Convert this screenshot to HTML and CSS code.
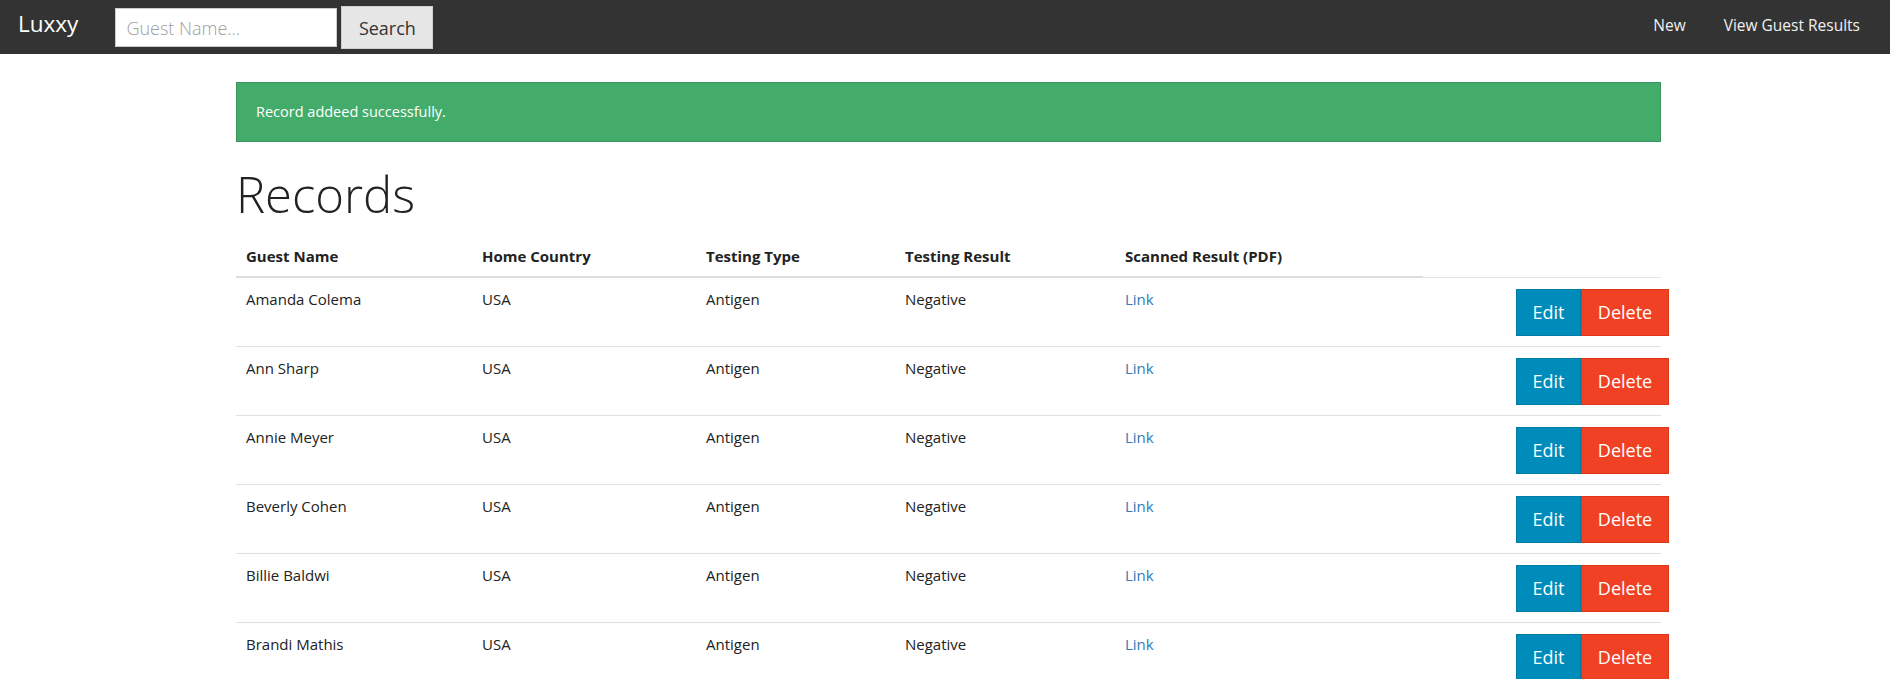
FILE: index.html
```html
<!DOCTYPE html>
<html lang="en">
<head>
<meta charset="utf-8">
<title>Luxxy - Records</title>
<link rel="stylesheet" href="styles.css">
</head>
<body>
<nav class="topbar">
  <div class="topbar-left">
    <a class="brand" href="#">Luxxy</a>
    <form class="search-form">
      <input class="search-input" type="text" placeholder="Guest Name...">
      <button class="search-btn" type="button">Search</button>
    </form>
  </div>
  <ul class="topbar-right">
    <li><a href="#">New</a></li>
    <li><a href="#">View Guest Results</a></li>
  </ul>
</nav>

<main class="container">
  <div class="alert-success">Record addeed successfully.</div>
  <h1 class="page-title">Records</h1>
  <table class="records">
    <colgroup>
      <col class="c-name">
      <col class="c-country">
      <col class="c-type">
      <col class="c-result">
      <col class="c-scan">
      <col class="c-actions">
    </colgroup>
    <thead>
      <tr>
        <th>Guest Name</th>
        <th>Home Country</th>
        <th>Testing Type</th>
        <th>Testing Result</th>
        <th>Scanned Result (PDF)</th>
        <th class="th-empty"></th>
      </tr>
    </thead>
    <tbody>
      <tr>
        <td>Amanda Colema</td><td>USA</td><td>Antigen</td><td>Negative</td><td><a class="pdf-link" href="#">Link</a></td>
        <td class="actions"><div class="btn-group"><a class="btn btn-edit" href="#">Edit</a><a class="btn btn-delete" href="#">Delete</a></div></td>
      </tr>
      <tr>
        <td>Ann Sharp</td><td>USA</td><td>Antigen</td><td>Negative</td><td><a class="pdf-link" href="#">Link</a></td>
        <td class="actions"><div class="btn-group"><a class="btn btn-edit" href="#">Edit</a><a class="btn btn-delete" href="#">Delete</a></div></td>
      </tr>
      <tr>
        <td>Annie Meyer</td><td>USA</td><td>Antigen</td><td>Negative</td><td><a class="pdf-link" href="#">Link</a></td>
        <td class="actions"><div class="btn-group"><a class="btn btn-edit" href="#">Edit</a><a class="btn btn-delete" href="#">Delete</a></div></td>
      </tr>
      <tr>
        <td>Beverly Cohen</td><td>USA</td><td>Antigen</td><td>Negative</td><td><a class="pdf-link" href="#">Link</a></td>
        <td class="actions"><div class="btn-group"><a class="btn btn-edit" href="#">Edit</a><a class="btn btn-delete" href="#">Delete</a></div></td>
      </tr>
      <tr>
        <td>Billie Baldwi</td><td>USA</td><td>Antigen</td><td>Negative</td><td><a class="pdf-link" href="#">Link</a></td>
        <td class="actions"><div class="btn-group"><a class="btn btn-edit" href="#">Edit</a><a class="btn btn-delete" href="#">Delete</a></div></td>
      </tr>
      <tr>
        <td>Brandi Mathis</td><td>USA</td><td>Antigen</td><td>Negative</td><td><a class="pdf-link" href="#">Link</a></td>
        <td class="actions"><div class="btn-group"><a class="btn btn-edit" href="#">Edit</a><a class="btn btn-delete" href="#">Delete</a></div></td>
      </tr>
    </tbody>
  </table>
</main>
</body>
</html>
```

FILE: styles.css
```css
html, body {
  margin: 0;
  padding: 0;
  overflow: hidden;
}

body {
  font-family: "Open Sans", "Liberation Sans", sans-serif;
  color: #222222;
  background: #ffffff;
}

a {
  text-decoration: none;
}

/* ---------- top bar ---------- */
.topbar {
  display: flex;
  justify-content: space-between;
  align-items: flex-start;
  height: 54px;
  background: #333333;
}

.topbar-left {
  display: flex;
  align-items: flex-start;
}

.brand {
  display: block;
  margin: 9px 0 0 18px;
  font-size: 22.5px;
  line-height: 30px;
  color: #ffffff;
}

.search-form {
  display: flex;
  align-items: flex-start;
  gap: 4px;
  margin: 0 0 0 37px;
}

.search-input {
  box-sizing: border-box;
  width: 222px;
  height: 39px;
  margin-top: 8px;
  padding: 0 10px;
  border: 1px solid #cccccc;
  background: #ffffff;
  font-family: "Open Sans", "Liberation Sans", sans-serif;
  font-size: 18px;
  font-weight: 300;
  color: #333333;
  outline: none;
}

.search-input::placeholder {
  color: #a0a0a0;
}

.search-btn {
  box-sizing: border-box;
  width: 92px;
  height: 43px;
  margin-top: 6px;
  padding: 0;
  border: 1px solid #d0d0d0;
  background: #e6e6e6;
  font-family: "Open Sans", "Liberation Sans", sans-serif;
  font-size: 18px;
  color: #333333;
}

.topbar-right {
  display: flex;
  gap: 38px;
  list-style: none;
  margin: 0;
  padding: 0 30px 0 0;
}

.topbar-right a {
  display: block;
  font-size: 15.5px;
  line-height: 20px;
  padding-top: 15px;
  color: #f0f0f0;
}

/* ---------- content ---------- */
.container {
  width: 1425px;
  margin: 0 0 0 236px;
}

.alert-success {
  box-sizing: border-box;
  height: 60px;
  margin-top: 28px;
  padding: 0 20px 0 19px;
  border: 1px solid #3a945b;
  background: #43ac6a;
  color: #ffffff;
  font-size: 14.5px;
  line-height: 58px;
}

.page-title {
  margin: 22px 0 0 0;
  font-size: 49px;
  font-weight: 300;
  line-height: 60px;
  color: #222222;
}

.records {
  width: 1425px;
  margin-top: 12px;
  border-collapse: collapse;
  table-layout: fixed;
}

.c-name { width: 236px; }
.c-country { width: 224px; }
.c-type { width: 199px; }
.c-result { width: 220px; }
.c-scan { width: 308px; }
.c-actions { width: 238px; }

.records th {
  padding: 10px 10px 10px 10px;
  text-align: left;
  font-size: 15px;
  font-weight: 700;
  line-height: 20px;
  color: #222222;
  border-bottom: 2px solid #dddddd;
}

.records th.th-empty {
  border-bottom: 1px solid #e3e3e3;
}

.records td {
  padding: 11px 10px 10px 10px;
  vertical-align: top;
  font-size: 15px;
  line-height: 20px;
  color: #222222;
  border-top: 1px solid #e0e0e0;
}

.pdf-link {
  color: #337ab7;
}

.records td.actions {
  padding-right: 10px;
}

.btn-group {
  display: flex;
  justify-content: flex-end;
  margin-right: -18px;
}

.btn {
  box-sizing: border-box;
  display: block;
  height: 47px;
  padding: 0;
  text-align: center;
  font-size: 18px;
  line-height: 45px;
  color: #ffffff;
}

.btn-edit {
  width: 65px;
  background: #008cba;
  border: 1px solid #007ba4;
}

.btn-delete {
  width: 88px;
  background: #f04124;
  border: 1px solid #de3518;
}
```
